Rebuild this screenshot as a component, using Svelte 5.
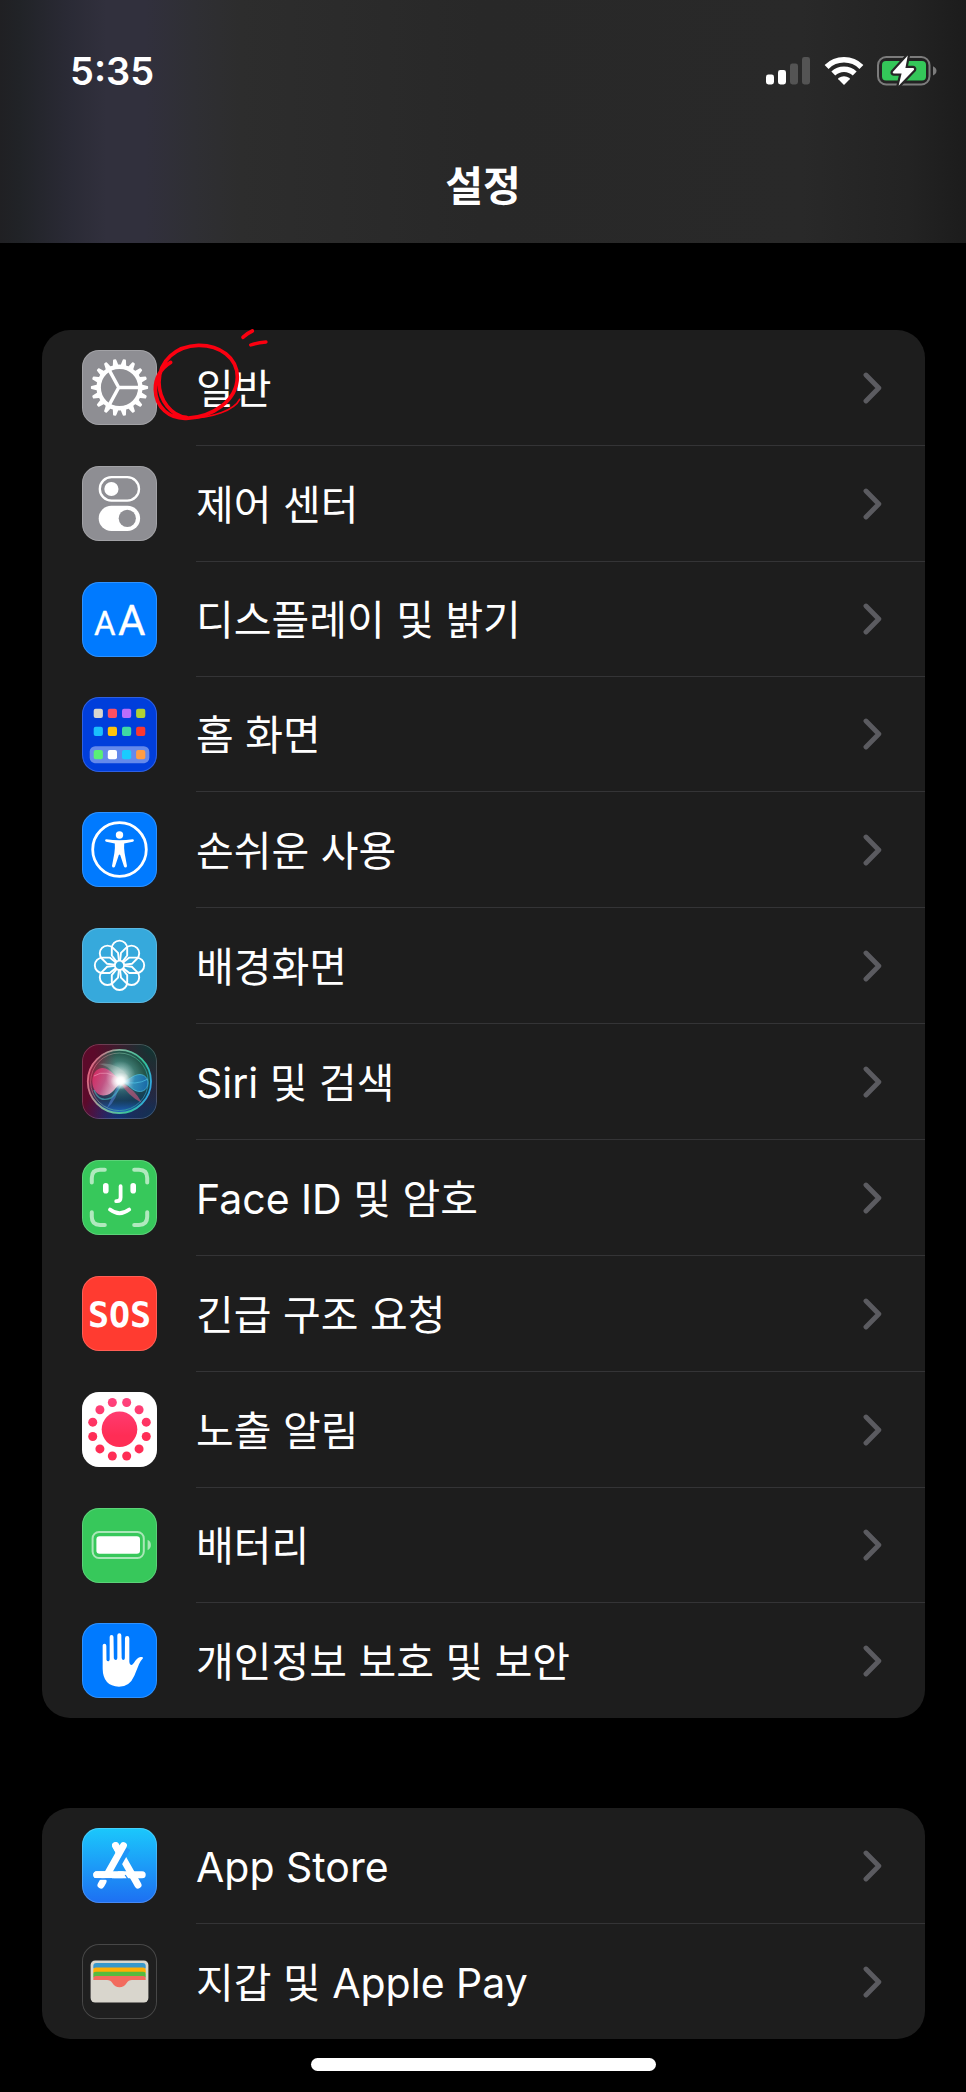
<script>
  const groups = [
    {
      name: '기기 설정',
      items: [
        { id: 'general', label: '일반', marked: true },
        { id: 'control', label: '제어 센터' },
        { id: 'display', label: '디스플레이 및 밝기', tight: true },
        { id: 'home', label: '홈 화면', tight: true },
        { id: 'access', label: '손쉬운 사용' },
        { id: 'wallpaper', label: '배경화면' },
        { id: 'siri', label: 'Siri 및 검색' },
        { id: 'faceid', label: 'Face ID 및 암호' },
        { id: 'sos', label: '긴급 구조 요청' },
        { id: 'exposure', label: '노출 알림' },
        { id: 'battery', label: '배터리', tight: true },
        { id: 'privacy', label: '개인정보 보호 및 보안' }
      ]
    },
    {
      name: '스토어 및 결제',
      items: [
        { id: 'store', label: 'App Store' },
        { id: 'wallet', label: '지갑 및 Apple Pay' }
      ]
    }
  ];

  const teeth = Array.from({ length: 18 }, (_, i) => i * 20);
  const petals = Array.from({ length: 8 }, (_, i) => i * 45);
  const dots = Array.from({ length: 12 }, (_, i) => {
    const a = ((15 + i * 30) * Math.PI) / 180;
    return { x: 37.5 + 27.7 * Math.sin(a), y: 37.3 - 27.7 * Math.cos(a) };
  });
  const apps = [
    ['#d8d6cf', '#fd4f63', '#bb6dfb', '#b0d136'],
    ['#1abffd', '#ffc30b', '#3fd9a4', '#fb372f'],
    ['#59f075', '#ffffff', '#1acbff', '#ff9d43']
  ];
  const appX = [16.3, 30.4, 44.6, 58.7];
  const appY = [16.3, 34.3, 57.7];
</script>

<div class="screen">
  <header>
    <div class="status">
      <time>5:35</time>
      <div class="indicators">
        <svg width="45" height="28" viewBox="0 0 45 28" aria-hidden="true">
          <rect x="0" y="17.5" width="8" height="10" rx="2.4" fill="#fff" />
          <rect x="12" y="13" width="8" height="14.5" rx="2.4" fill="#fff" />
          <rect x="24" y="6.5" width="8" height="21" rx="2.4" fill="#545454" />
          <rect x="36" y="0" width="8" height="27.5" rx="2.4" fill="#545454" />
        </svg>
        <svg width="40" height="30" viewBox="0 0 40 30" aria-hidden="true">
          <g fill="none" stroke="#fff" stroke-width="5.6">
            <path d="M2.6 10.9 A24.8 24.8 0 0 1 37.4 10.9" />
            <path d="M9.3 17.5 A15.4 15.4 0 0 1 30.7 17.5" />
          </g>
          <path d="M20 29 L14.3 23.2 Q13.7 22.5 14.5 21.9 Q20 18.6 25.5 21.9 Q26.3 22.5 25.7 23.2 Z" fill="#fff" />
        </svg>
        <svg width="60" height="32" viewBox="0 0 60 32" aria-hidden="true">
          <rect x="1" y="2" width="51.5" height="27.5" rx="8.2" fill="none" stroke="#7c7c7c" stroke-width="2" />
          <path d="M56 11.2 Q59.5 12.8 59.5 15.8 Q59.5 18.8 56 20.4 Z" fill="#7c7c7c" />
          <rect x="5" y="6" width="44" height="19.6" rx="4" fill="#34c759" />
          <path d="M30.8 0.6 L15.8 17 Q15.3 18.4 16.8 18.6 L24.6 18.6 L21.6 30.8 L37 14.8 Q37.6 13.2 36 13 L28.4 13 Z" fill="#fff" stroke="#262626" stroke-width="4.4" stroke-linejoin="round" />
          <path d="M30.8 0.6 L15.8 17 Q15.3 18.4 16.8 18.6 L24.6 18.6 L21.6 30.8 L37 14.8 Q37.6 13.2 36 13 L28.4 13 Z" fill="#fff" />
        </svg>
      </div>
    </div>
    <h1>설정</h1>
  </header>

  <main>
    {#each groups as group}
      <ul aria-label={group.name}>
        {#each group.items as item}
          <li>
            <a class="row" class:tight={item.tight} href={'#' + item.id}>
              <span class="tile {item.id}">
                <svg viewBox="0 0 75 75" aria-hidden="true">
                  {#if item.id === 'general'}
                    <g transform="translate(37.5 37.5)" fill="#fff" stroke="none">
                      {#each teeth as angle}
                        <path transform="rotate({angle})" d="M21 -3 L23 -2.7 L28 -1.6 Q28.6 -1.4 28.6 -0.8 L28.6 0.8 Q28.6 1.4 28 1.6 L23 2.7 L21 3 Z" />
                      {/each}
                      <circle r="20.8" fill="none" stroke="#fff" stroke-width="4.4" />
                      <path d="M-0.8 0 L20 0 M-0.8 0 L-10.4 -17.6 M-0.8 0 L-10.4 17.6" fill="none" stroke="#fff" stroke-width="3.4" />
                    </g>
                  {:else if item.id === 'control'}
                    <rect x="17.8" y="11.2" width="39.2" height="23.4" rx="11.7" fill="none" stroke="#fff" stroke-width="2.3" />
                    <circle cx="29.4" cy="23" r="7.1" fill="#fff" />
                    <rect x="16.7" y="39.8" width="41.4" height="25.2" rx="12.6" fill="#fff" />
                    <circle cx="45.3" cy="52.3" r="8.6" fill="#8e8e93" />
                  {:else if item.id === 'display'}
                    <g fill="#fff" stroke="#fff" stroke-width="0.3" stroke-linejoin="round" text-anchor="middle">
                      <text x="22.8" y="53" class="letters" font-size="33">A</text>
                      <text x="49.6" y="53" class="letters" font-size="42">A</text>
                    </g>
                  {:else if item.id === 'home'}
                    <rect x="7.7" y="49.2" width="59.6" height="17" rx="5.5" fill="#6489eb" />
                    {#each apps as line, r}
                      {#each line as color, c}
                        <rect x={appX[c] - 4.6} y={appY[r] - 4.6} width="9.2" height="9.2" rx="2" fill={color} />
                      {/each}
                    {/each}
                  {:else if item.id === 'access'}
                    <circle cx="37.5" cy="37.5" r="26.8" fill="none" stroke="#fff" stroke-width="2.8" />
                    <circle cx="37.5" cy="23" r="3.7" fill="#fff" />
                    <path d="M24.4 27.2 Q37.5 29.4 50.6 27.2 Q51.8 27.2 51.9 28.4 Q51.8 29.4 50.8 29.7 L42.2 31.4 Q41.8 36 42.6 41 L45 54 Q44.8 55.5 43.4 55.5 Q42.4 55.5 42 54.6 L38.2 43 Q37.5 41.8 36.8 43 L33 54.6 Q32.6 55.5 31.6 55.5 Q30.2 55.5 30 54 L32.4 41 Q33.2 36 32.8 31.4 L24.2 29.7 Q23.2 29.4 23.1 28.4 Q23.2 27.2 24.4 27.2 Z" fill="#fff" />
                  {:else if item.id === 'wallpaper'}
                    <g transform="translate(37.5 37.3)" fill="none" stroke="#fff" stroke-width="1.9" stroke-linejoin="round">
                      {#each petals as angle}
                        <path transform="rotate({angle})" d="M-3 -3.8 L-7.7 -9.8 V-17 A7.7 7.7 0 0 1 7.7 -17 V-9.8 L3 -3.8" />
                      {/each}
                      <circle r="4.7" />
                    </g>
                  {:else if item.id === 'siri'}
                    <defs>
                      <radialGradient id="orbBase" cx="37" cy="34" r="34" gradientUnits="userSpaceOnUse">
                        <stop offset="0" stop-color="#b9d9d3" />
                        <stop offset="0.35" stop-color="#4c8d85" />
                        <stop offset="0.75" stop-color="#24564b" />
                        <stop offset="1" stop-color="#125046" />
                      </radialGradient>
                      <linearGradient id="orbRing" x1="0" y1="0.3" x2="1" y2="0.6">
                        <stop offset="0" stop-color="#e5607f" />
                        <stop offset="0.4" stop-color="#7fb9a0" />
                        <stop offset="0.8" stop-color="#34c29a" />
                        <stop offset="1" stop-color="#31a5e4" />
                      </linearGradient>
                      <linearGradient id="orbLow" x1="0" y1="0" x2="0" y2="1">
                        <stop offset="0.45" stop-color="#0d2d5c" stop-opacity="0" />
                        <stop offset="0.8" stop-color="#12345f" stop-opacity="0.75" />
                        <stop offset="1" stop-color="#2168d4" stop-opacity="0.95" />
                      </linearGradient>
                      <linearGradient id="orbSide" x1="0" y1="0" x2="1" y2="0">
                        <stop offset="0" stop-color="#b8123f" stop-opacity="0.9" />
                        <stop offset="0.45" stop-color="#8e2744" stop-opacity="0" />
                      </linearGradient>
                      <linearGradient id="lobePink" x1="0" y1="0" x2="1" y2="0.4">
                        <stop offset="0" stop-color="#e02560" />
                        <stop offset="0.5" stop-color="#cf5489" />
                        <stop offset="1" stop-color="#f8dbe6" />
                      </linearGradient>
                      <linearGradient id="lobeBlue" x1="0" y1="0" x2="1" y2="0">
                        <stop offset="0" stop-color="#d9f4f8" />
                        <stop offset="0.5" stop-color="#2f92c4" />
                        <stop offset="1" stop-color="#1a6fb8" />
                      </linearGradient>
                      <radialGradient id="flare">
                        <stop offset="0" stop-color="#fff" />
                        <stop offset="0.35" stop-color="#fff" stop-opacity="0.85" />
                        <stop offset="1" stop-color="#fff" stop-opacity="0" />
                      </radialGradient>
                    </defs>
                    <circle cx="37.4" cy="37.4" r="32" fill="url(#orbBase)" />
                    <circle cx="37.4" cy="37.4" r="32" fill="url(#orbSide)" />
                    <circle cx="37.4" cy="37.4" r="32" fill="url(#orbLow)" />
                    <path d="M38 38 Q30 52 25 64 Q35 57 38 38 Z" fill="#5a8be8" opacity="0.5" />
                    <path d="M38 38 Q46 52 60 59 Q53 45 38 38 Z" fill="#c9577c" opacity="0.65" />
                    <path d="M38 37 Q28 21 16 20 Q34 17 46 32 Z" fill="#a9bdb7" opacity="0.35" />
                    <path d="M41 37.5 C33 34 29 23.5 20 24 C7 25 7 50 21 51.5 C31 52 33 42 41 37.5 Z" fill="url(#lobePink)" opacity="0.88" />
                    <path d="M12 46 Q17 59 29 54 Q37 48 40 38" fill="none" stroke="#49bec6" stroke-width="1.4" opacity="0.6" />
                    <path d="M12 32 Q24 24 40 37" fill="none" stroke="#f09abb" stroke-width="0.9" opacity="0.7" />
                    <path d="M38 37 C47 38 50 30.500 58 30.500 C68.500 31 68.500 46.500 58.500 47.500 C50 48 47 39 38 37 Z" fill="url(#lobeBlue)" stroke="#4cc5e6" stroke-width="0.8" opacity="0.85" />
                    <path d="M38 37 Q54 42 66 35" fill="none" stroke="#54ccea" stroke-width="0.9" opacity="0.7" />
                    <circle cx="37.4" cy="37.4" r="31.6" fill="none" stroke="url(#orbRing)" stroke-width="1.8" />
                    <circle cx="37.4" cy="37.8" r="28.8" fill="none" stroke="url(#orbRing)" stroke-width="0.9" opacity="0.65" />
                    <circle cx="38.600" cy="32" r="15" fill="url(#flare)" opacity="0.45" />
                    <ellipse cx="38.600" cy="37" rx="10" ry="8.500" fill="url(#flare)" />
                    <circle cx="38.800" cy="37" r="5.500" fill="url(#flare)" />
                  {:else if item.id === 'faceid'}
                    <g fill="none" stroke="#b0e9be" stroke-width="4" stroke-linecap="round">
                      <path d="M9.8 22.6 V18 Q9.8 9.8 18 9.8 H22.8" />
                      <path d="M52.2 9.8 H57 Q65.2 9.8 65.2 18 V22.6" />
                      <path d="M65.2 52.2 V56.8 Q65.2 65 57 65 H52.2" />
                      <path d="M22.8 65 H18 Q9.8 65 9.8 56.8 V52.2" />
                    </g>
                    <g fill="none" stroke="#fff" stroke-linecap="round">
                      <path d="M23.8 25.8 V30.8 M51.2 25.8 V30.8" stroke-width="5.6" />
                      <path d="M38.6 26.2 V37.6 Q38.6 41.2 35 41.2 H34.2" stroke-width="3.8" />
                      <path d="M28 49.6 Q37.5 57 47.2 49.6" stroke-width="3.8" />
                    </g>
                  {:else if item.id === 'sos'}
                    <text x="37.5" y="50.500" class="sos-text" font-size="35" text-anchor="middle" fill="#fff">SOS</text>
                  {:else if item.id === 'exposure'}
                    <defs>
                      <linearGradient id="spread" x1="0" y1="6" x2="0" y2="69" gradientUnits="userSpaceOnUse">
                        <stop offset="0" stop-color="#ff437f" />
                        <stop offset="0.6" stop-color="#ff2d55" />
                        <stop offset="1" stop-color="#ff2d55" />
                      </linearGradient>
                    </defs>
                    <g fill="url(#spread)">
                      <circle cx="37.5" cy="37.3" r="17.8" />
                      {#each dots as dot}
                        <circle cx={dot.x} cy={dot.y} r="4.5" />
                      {/each}
                    </g>
                  {:else if item.id === 'battery'}
                    <rect x="10.6" y="24" width="51.2" height="26" rx="6.4" fill="none" stroke="#a9e7b8" stroke-width="2" />
                    <rect x="14.4" y="28.2" width="43.6" height="17.6" rx="3.2" fill="#fff" />
                    <path d="M65.6 31.8 Q68.9 33.4 68.9 37 Q68.9 40.6 65.6 42.2 Z" fill="#a9e7b8" />
                  {:else if item.id === 'privacy'}
                    <g transform="scale(0.3333) translate(-37 -429)">
                      <path d="M99 496 Q99 491 104.500 491 Q110 491 110 497 L110.500 540 Q113 545 118 543 Q120 542 120 538 L120 471 Q120 465 125.500 465 Q131.500 465 131.500 471 L132.500 535 Q134 540 138 540 Q143 540 143 534 L143 466 Q143 460 149 460 Q155 460 155 466 L156 534 Q157 540 161 540 Q165 540 165.500 535 L166 475 Q166 468 172.500 468 Q179 468 179 475 L179 545 Q180 555 186 555 Q189 554 193 548 Q202 533 213 531 Q221 530 220 535 Q213 542 208 553 L194 587 Q180 620 148 620 Q100 618 99 566 Z" fill="#fff" />
                    </g>
                  {:else if item.id === 'store'}
                    <g fill="none" stroke="#fff" stroke-width="7" stroke-linecap="round">
                      <path d="M14.800 46.700 H60.200" />
                      <path d="M33.600 17.600 L56 57" />
                    </g>
                    <path d="M44 19.500 L26.400 50" fill="none" stroke="#1e96f8" stroke-width="9.800" />
                    <path d="M33.600 17.600 L36.500 22.700" fill="none" stroke="#fff" stroke-width="7" stroke-linecap="round" />
                    <path d="M41.400 17.600 L26.200 44.800" fill="none" stroke="#fff" stroke-width="7" stroke-linecap="round" />
                    <path d="M20 46.700 H42.500 L44.500 50.200 H20 Z" fill="#fff" />
                    <path d="M14.800 46.700 H40" fill="none" stroke="#fff" stroke-width="7" stroke-linecap="round" />
                    <path d="M43.200 47 L46 51.200" stroke="#1f8bf7" stroke-width="1.200" />
                    <path d="M13 51.400 H45" stroke="#1f86f6" stroke-width="1.600" />
                    <path d="M21 53.600 L19 57" fill="none" stroke="#fff" stroke-width="7" stroke-linecap="round" />
                    <path d="M12 51 H30" stroke="#1f86f6" stroke-width="1.600" />
                  {:else if item.id === 'wallet'}
                    <rect x="8.600" y="16.500" width="57.800" height="42" rx="4.600" fill="#d9d6cd" />
                    <path d="M11.300 24.500 V22 Q11.300 19 14.300 19 H60.700 Q63.700 19 63.700 22 V24.500 Z" fill="#3898cb" />
                    <path d="M11.300 29 V26 Q11.300 23.400 14 23.400 H61 Q63.700 23.400 63.700 26 V29 Z" fill="#ffae05" />
                    <path d="M11.300 33.500 V30 Q11.300 27.700 14 27.700 H61 Q63.700 27.700 63.700 30 V33.500 Z" fill="#56bb3e" />
                    <path d="M11.300 36 V34.500 Q11.300 32 14 32 H61 Q63.700 32 63.700 34.500 V36 H50 Q46.500 36 44.500 39.200 Q42 43.300 37.500 43.300 Q33 43.300 30.500 39.200 Q28.500 36 25 36 Z" fill="#f26b5e" />
                  {/if}
                </svg>
              </span>
              <span class="body">
                <span class="label">{item.label}</span>
                <svg class="chevron" width="19" height="32" viewBox="0 0 19 32" aria-hidden="true">
                  <path d="M3 3 L15.800 16 L3 29" fill="none" stroke="#5b5b60" stroke-width="4.900" stroke-linecap="round" stroke-linejoin="round" />
                </svg>
              </span>
            </a>
            {#if item.marked}
              <svg class="scribble" viewBox="340 20 360 291" aria-hidden="true">
                <g fill="none" stroke="#fb0010" stroke-linecap="round" stroke-linejoin="round">
                  <path d="M393 126 C362 144 346 176 347 208 C348 262 390 296 440 294 C520 291 592 240 593 170 C593 112 540 74 476 75 C410 77 358 120 358 186 C358 240 396 288 440 291" stroke-width="11" />
                  <path d="M440 294 C520 294 585 268 600 237" stroke-width="5" />
                  <path d="M610 51 Q620 40 638 32" stroke-width="11" />
                  <path d="M633 74 Q652 67 679 65" stroke-width="10" />
                </g>
              </svg>
            {/if}
          </li>
        {/each}
      </ul>
    {/each}
  </main>

  <div class="home-bar"></div>
</div>

<style>
  :global(body) {
    background: #000;
  }

  .screen {
    color: #fff;
    font-family: Inter, 'Noto Sans CJK KR', sans-serif;
  }

  header {
    box-sizing: border-box;
    height: 243px;
    background: linear-gradient(
      90deg,
      #202023 0%,
      #212327 2%,
      #2a2a35 7%,
      #31303d 11%,
      #31303d 15%,
      #2f2f34 20%,
      #2d2d2d 25%,
      #282828 50%,
      #292929 83%,
      #232323 94%,
      #1c1c1c 100%
    );
  }

  .status {
    display: flex;
    align-items: center;
    justify-content: space-between;
    height: 142px;
    padding: 0 29px 0 70px;
  }

  time {
    font-size: 38px;
    font-weight: 600;
  }

  .indicators {
    display: flex;
    align-items: center;
    gap: 13px;
  }

  h1 {
    margin: 12px 0 0;
    font-size: 41px;
    line-height: 64px;
    font-weight: 600;
    text-align: center;
  }

  main {
    display: flex;
    flex-direction: column;
    gap: 90px;
    padding: 87px 41px 19px 42px;
  }

  ul {
    margin: 0;
    padding: 0;
    list-style: none;
    background: #1d1d1d;
    border-radius: 28px;
  }

  li {
    position: relative;
  }

  .row {
    display: flex;
    box-sizing: border-box;
    height: 116px;
    padding-left: 40px;
    gap: 39px;
    color: inherit;
    text-decoration: none;
  }

  .row.tight,
  li:last-child .row {
    height: 115px;
  }

  .tile {
    flex: none;
    width: 75px;
    height: 75px;
    margin-top: 20px;
    border-radius: 17px;
    box-shadow: inset 0 0 0 1px rgba(255, 255, 255, 0.18);
  }

  .tile svg {
    display: block;
    width: 75px;
    height: 75px;
  }

  .general,
  .control {
    background: #8e8e93;
  }

  .display,
  .access,
  .privacy {
    background: #007aff;
  }

  .home {
    background: #003edb;
  }

  .wallpaper {
    background: #36a9dc;
  }

  .siri {
    background:
      radial-gradient(circle at 100% 0, #083b35 0, transparent 60%),
      radial-gradient(circle at 100% 100%, #0a3558 0, transparent 60%),
      radial-gradient(circle at 50% 100%, #152f86 0, transparent 45%),
      #5c0a2a;
  }

  .faceid,
  .battery {
    background: #37c85b;
  }

  .sos {
    background: #ff3b30;
  }

  .exposure {
    background: #fff;
  }

  .store {
    background: linear-gradient(#1bc8fc, #1d6ff2);
  }

  .wallet {
    background: #1f1f1f;
  }

  .letters {
    font-family: Roboto, sans-serif;
    font-weight: 400;
  }

  .sos-text {
    font-family: 'DejaVu Sans Mono', monospace;
    font-weight: 700;
  }

  .body {
    display: flex;
    flex: 1;
    align-items: center;
    justify-content: space-between;
    min-width: 0;
    padding-right: 43px;
    border-bottom: 1px solid #343436;
  }

  li:last-child .body {
    border-bottom: 0;
  }

  .label {
    padding-top: 2px;
    font-size: 41px;
    line-height: 60px;
    white-space: nowrap;
  }

  .chevron {
    flex: none;
  }

  .scribble {
    position: absolute;
    top: -3px;
    left: 111px;
    width: 120px;
    height: 97px;
    pointer-events: none;
  }

  .home-bar {
    width: 345px;
    max-width: 60%;
    height: 13px;
    margin: 0 auto 20px;
    border-radius: 7px;
    background: #fff;
  }
</style>
